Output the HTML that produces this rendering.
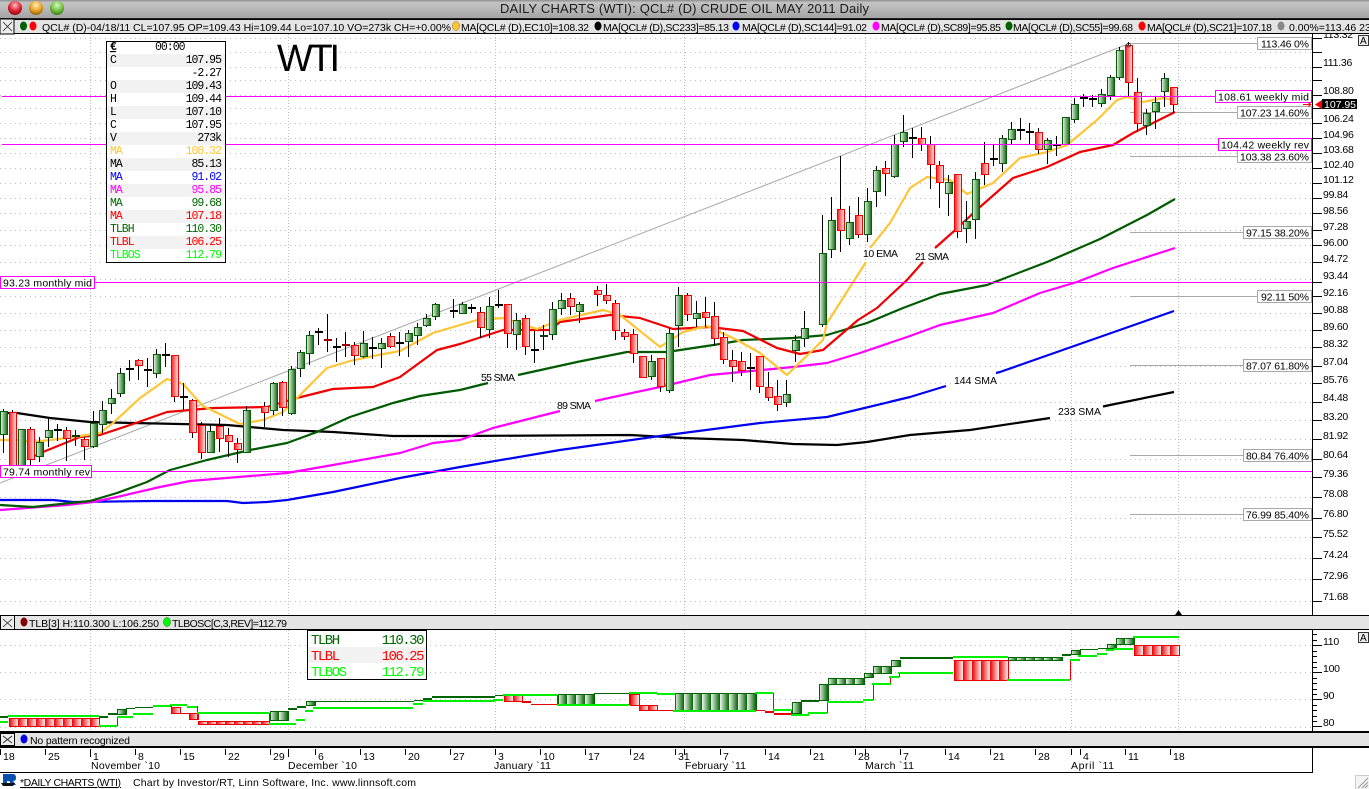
<!DOCTYPE html>
<html><head><meta charset="utf-8"><title>DAILY CHARTS (WTI)</title>
<style>
html,body{margin:0;padding:0;background:#fff;overflow:hidden}
svg{display:block}
text{font-family:"Liberation Sans",sans-serif;font-size:10.5px;fill:#000}
.m text,text.m{font-family:"Liberation Mono",monospace}
.b rect{width:7px;shape-rendering:crispEdges}
.ax text{font-size:10.5px;letter-spacing:-.25px}
.box rect{fill:#fff;stroke:#a8a8a8;stroke-width:1;shape-rendering:crispEdges}
.mbox rect{fill:#fff;stroke:#f0f;stroke-width:1;shape-rendering:crispEdges}
.ma{fill:none;stroke-width:2.2;stroke-linejoin:round}
.d text{font-size:11.5px;letter-spacing:-1px;font-family:"Liberation Mono",monospace}
.r{text-anchor:end}
.o text{font-size:14px;letter-spacing:-1.5px;font-family:"Liberation Mono",monospace}
</style></head><body>
<svg xmlns="http://www.w3.org/2000/svg" width="1369" height="789" viewBox="0 0 1369 789">
<defs>
<linearGradient id="tb" x1="0" y1="0" x2="0" y2="1"><stop offset="0" stop-color="#8c8c8c"/><stop offset=".14" stop-color="#c4c4c4"/><stop offset="1" stop-color="#a4a4a4"/></linearGradient>
<linearGradient id="cg"><stop offset="0" stop-color="#eef5ee"/><stop offset="1" stop-color="#0a6a0a"/></linearGradient>
<linearGradient id="cr"><stop offset="0" stop-color="#ff2020"/><stop offset="1" stop-color="#ffe8e8"/></linearGradient>
<linearGradient id="gb"><stop offset="0" stop-color="#f2f7f2"/><stop offset="1" stop-color="#006400"/></linearGradient>
<linearGradient id="rb"><stop offset="0" stop-color="#e80000"/><stop offset="1" stop-color="#ffeaea"/></linearGradient>
<pattern id="pg" patternUnits="userSpaceOnUse" width="9" height="200"><rect width="9" height="200" fill="url(#gb)"/></pattern>
<pattern id="pr" patternUnits="userSpaceOnUse" width="9" height="200"><rect width="9" height="200" fill="url(#rb)"/></pattern>
<radialGradient id="l1" cx=".5" cy=".3" r=".7"><stop offset="0" stop-color="#ffc0c0"/><stop offset=".6" stop-color="#e02030"/><stop offset="1" stop-color="#8a0a10"/></radialGradient>
<radialGradient id="l2" cx=".5" cy=".3" r=".7"><stop offset="0" stop-color="#ffeec0"/><stop offset=".6" stop-color="#e8a020"/><stop offset="1" stop-color="#906010"/></radialGradient>
<radialGradient id="l3" cx=".5" cy=".3" r=".7"><stop offset="0" stop-color="#d8f8c0"/><stop offset=".6" stop-color="#70c040"/><stop offset="1" stop-color="#3a7a20"/></radialGradient>
</defs>
<rect width="1369" height="789" fill="#fff"/>

<!-- grid -->
<g stroke="#bdbdbd" stroke-width="1" stroke-dasharray="1 4" fill="none" shape-rendering="crispEdges">
<path d="M0 38.500H1312M0 52.500H1312M0 67.500H1312M0 80.500H1312M0 95.500H1312M0 108.500H1312M0 123.500H1312M0 138.500H1312M0 153.500H1312M0 168.500H1312M0 183.500H1312M0 198.500H1312M0 213.500H1312M0 230.500H1312M0 245.500H1312M0 262.500H1312M0 279.500H1312M0 296.500H1312M0 313.500H1312M0 330.500H1312M0 347.500H1312M0 366.500H1312M0 383.500H1312M0 402.500H1312M0 420.500H1312M0 439.500H1312M0 459.500H1312M0 477.500H1312M0 497.500H1312M0 518.500H1312M0 537.500H1312M0 558.500H1312M0 579.500H1312M0 601.500H1312"/>
<path d="M0 645.500H1312M0 672.500H1312M0 699.500H1312M0 727.500H1312"/>
</g>
<g stroke="#bdbdbd" stroke-width="1" stroke-dasharray="1 2" fill="none" shape-rendering="crispEdges">
<path d="M90.500 34V615M288.500 34V615M495.500 34V615M684.500 34V615M865.500 34V615M1071.500 34V615M1178.500 34V615"/>
<path d="M90.500 630V731M288.500 630V731M495.500 630V731M684.500 630V731M865.500 630V731M1071.500 630V731M1178.500 630V731"/>
</g>

<!-- trend line -->
<path d="M0 483L1128 44" stroke="#a8a8a8" stroke-width="1" fill="none"/>
<!-- fib lines -->
<path d="M1127 43.500H1258M1130 112.500H1238M1130 156.500H1238M1130 232.500H1244M1130 296.500H1258M1130 365.500H1243M1130 455.500H1243M1130 514.500H1243" stroke="#a8a8a8" fill="none" shape-rendering="crispEdges"/>

<!-- moving averages -->
<polyline class="ma" stroke="#000" points="0,413 17,413 50,418 90,422 133,423 180,424 227,425 283,430 333,432 393,436 460,436 630,435 683,438 743,440 793,444 837,445 867,442 910,435 970,430 1050,418"/>
<polyline class="ma" stroke="#000" points="1103,406.500 1110,405 1174,392"/>
<polyline class="ma" stroke="#0000f0" points="0,500 53,500 73,502 153,501 227,501 243,503 267,502 287,500 333,492 400,478 460,467 560,450 660,436 760,423 827,417 910,397 946,386"/>
<polyline class="ma" stroke="#0000f0" points="996,373 1000,372 1174,311"/>
<polyline class="ma" stroke="#f0f" points="0,510 67,505 93,502 117,497 160,487 190,481 287,473 333,465 400,453 433,443 460,440 493,428 560,411"/>
<polyline class="ma" stroke="#f0f" points="595,401 660,387 710,375 793,367 827,363 860,353 910,336 940,325 993,313 1040,293 1077,282 1113,268 1175,248"/>
<polyline class="ma" stroke="#005a00" points="0,505 33,507 70,503 90,501 117,493 147,482 170,470 207,460 250,450 287,443 317,432 350,417 393,403 420,396 460,390 488,383"/>
<polyline class="ma" stroke="#005a00" points="518,375 577,362 627,352 667,352 720,344 743,340 793,338 827,335 867,323 903,308 940,294 987,285 1047,262 1100,239 1147,215 1175,199"/>
<polyline class="ma" stroke="#f00000" points="30,458 43,452 80,437 100,435 133,424 167,412 213,408 267,407 297,398 333,389 373,387 400,377 437,350 460,344 503,330 550,330 560,322 610,315 640,318 673,329 710,327 743,331 777,348 800,354 823,350 858,320 877,308 907,280 923,262"/>
<polyline class="ma" stroke="#f00000" points="935,248 953,232 980,207 1013,178 1047,167 1080,152 1113,145 1133,133 1175,112"/>
<polyline class="ma" stroke="#ffc535" points="0,440 20,440 33,442 67,438 100,433 113,423 140,398 167,379 183,384 203,406 240,424 263,420 283,412 297,398 327,368 350,361 373,356 400,351 433,333 460,325 477,320 503,318 537,329 560,320 603,310 620,315 660,347 683,332 707,326 737,340 760,353 787,375 823,340 827,323 850,287 866,262"/>
<polyline class="ma" stroke="#ffc535" points="870,248 890,223 910,188 927,177 950,180 967,194 993,183 1020,158 1047,152 1067,145 1097,120 1117,100 1127,97 1143,102 1163,98 1174,100"/>

<!-- wicks -->
<path stroke="#000" stroke-width="1" fill="none" shape-rendering="crispEdges" d="M3.500 409V453M12.500 410V467M21.500 429V467M30.500 427V465M39.500 437V462M48.500 419V447M57.500 424V441M66.500 427V461M75.500 430V446M84.500 437V460M93.500 411V448M102.500 401V433M111.500 389V414M120.500 368V397M129.500 360V381M138.500 359V380M147.500 358V387M156.500 349V378M165.500 343V367M174.500 355V402M183.500 383V410M192.500 399V438M201.500 422V459M210.500 424V452M219.500 418V452M228.500 428V457M237.500 438V463M246.500 406V453M264.500 402V427M273.500 382V415M282.500 381V416M291.500 366V415M300.500 350V377M309.500 331V365M318.500 328V345M327.500 314V352M336.500 338V362M345.500 332V357M354.500 342V365M363.500 331V358M372.500 337V359M381.500 338V368M390.500 333V348M399.500 332V356M408.500 330V357M417.500 323V345M426.500 314V327M435.500 303V320M453.500 299V318M462.500 302V314M471.500 304V313M480.500 307V338M489.500 297V338M498.500 290V308M507.500 304V348M516.500 313V350M525.500 315V355M534.500 331V363M543.500 325V350M552.500 302V340M561.500 293V315M570.500 293V315M579.500 302V323M597.500 286V306M606.500 284V304M615.500 300V340M624.500 329V340M633.500 329V363M642.500 356V378M651.500 355V380M660.500 358V392M669.500 328V393M678.500 287V347M687.500 293V321M696.500 301V327M705.500 297V327M714.500 302V346M723.500 332V364M732.500 350V382M741.500 352V376M750.500 353V390M759.500 356V393M768.500 372V401M777.500 380V411M786.500 380V407M795.500 335V362M804.500 311V347M822.500 215V327M831.500 197V258M840.500 156V252M849.500 206V245M858.500 197V238M867.500 188V242M876.500 166V207M885.500 161V196M894.500 135V178M903.500 115V147M912.500 128V158M921.500 127V151M930.500 136V189M939.500 161V208M948.500 175V216M957.500 174V238M966.500 201V243M975.500 172V239M984.500 142V185M993.500 145V166M1002.500 135V172M1011.500 122V144M1020.500 118V140M1029.500 123V144M1038.500 128V154M1047.500 138V164M1056.500 136V156M1065.500 117V144M1074.500 98V123M1083.500 94V107M1092.500 95V107M1101.500 89V107M1110.500 75V100M1119.500 47V80M1128.500 42V96M1137.500 78V132M1146.500 109V135M1155.500 96V129M1164.500 73V107M1173.500 87V113"/>
<!-- doji -->
<path stroke="#000" stroke-width="2" fill="none" shape-rendering="crispEdges" d="M54 430H62M126 369H134M144 370H152M162 355H170M180 397H188M315 332H323M333 347H341M369 348H377M396 343H404M450 311H458M468 308H476M495 305H503M531 350H539M747 368H755M909 138H917M990 159H998M1017 130H1025M1026 132H1034M1053 145H1061M1080 98H1088M1089 99H1097"/>
<path stroke="#0a3a0a" stroke-width="2" fill="none" shape-rendering="crispEdges" d="M72 436H80M540 336H548"/>
<path stroke="#a00000" stroke-width="2" fill="none" shape-rendering="crispEdges" d="M324 340H332M342 345H350"/>

<!-- green bodies -->
<g class="b" fill="url(#cg)" stroke="#0a5a0a">
<rect x="0.500" y="411.500" height="23"/><rect x="18.500" y="429.500" height="38"/><rect x="36.500" y="442.500" height="14"/><rect x="45.500" y="430.500" height="7"/><rect x="90.500" y="423.500" height="23"/><rect x="99.500" y="410.500" height="14"/><rect x="108.500" y="398.500" height="5"/><rect x="117.500" y="373.500" height="20"/><rect x="153.500" y="354.500" height="19"/><rect x="207.500" y="431.500" height="21"/><rect x="243.500" y="410.500" height="42"/><rect x="270.500" y="383.500" height="27"/><rect x="288.500" y="369.500" height="44"/><rect x="297.500" y="352.500" height="16"/><rect x="306.500" y="335.500" height="18"/><rect x="360.500" y="343.500" height="13"/><rect x="378.500" y="343.500" height="5"/><rect x="405.500" y="333.500" height="8"/><rect x="414.500" y="327.500" height="8"/><rect x="423.500" y="318.500" height="7"/><rect x="432.500" y="304.500" height="12"/><rect x="459.500" y="304.500" height="9"/><rect x="486.500" y="306.500" height="23"/><rect x="513.500" y="320.500" height="14"/><rect x="549.500" y="309.500" height="25"/><rect x="558.500" y="300.500" height="8"/><rect x="576.500" y="304.500" height="7"/><rect x="648.500" y="361.500" height="15"/><rect x="666.500" y="333.500" height="57"/><rect x="675.500" y="295.500" height="30"/><rect x="693.500" y="313.500" height="5"/><rect x="783.500" y="394.500" height="8"/><rect x="792.500" y="340.500" height="10"/><rect x="801.500" y="328.500" height="10"/><rect x="819.500" y="253.500" height="71"/><rect x="828.500" y="220.500" height="29"/><rect x="846.500" y="222.500" height="16"/><rect x="864.500" y="201.500" height="33"/><rect x="873.500" y="170.500" height="21"/><rect x="891.500" y="144.500" height="32"/><rect x="900.500" y="132.500" height="9"/><rect x="945.500" y="182.500" height="11"/><rect x="963.500" y="221.500" height="7"/><rect x="972.500" y="179.500" height="40"/><rect x="999.500" y="138.500" height="25"/><rect x="1008.500" y="129.500" height="10"/><rect x="1044.500" y="140.500" height="9"/><rect x="1062.500" y="117.500" height="27"/><rect x="1071.500" y="104.500" height="15"/><rect x="1098.500" y="94.500" height="9"/><rect x="1107.500" y="77.500" height="18"/><rect x="1116.500" y="50.500" height="27"/><rect x="1143.500" y="113.500" height="12"/><rect x="1152.500" y="102.500" height="9"/><rect x="1161.500" y="78.500" height="13"/>
</g>
<!-- red bodies -->
<g class="b" fill="url(#cr)" stroke="#f00000">
<rect x="9.500" y="412.500" height="55"/><rect x="27.500" y="429.500" height="30"/><rect x="63.500" y="430.500" height="8"/><rect x="81.500" y="439.500" height="7"/><rect x="135.500" y="360.500" height="5"/><rect x="171.500" y="355.500" height="41"/><rect x="189.500" y="400.500" height="32"/><rect x="198.500" y="425.500" height="27"/><rect x="216.500" y="426.500" height="12"/><rect x="225.500" y="435.500" height="6"/><rect x="234.500" y="443.500" height="6"/><rect x="261.500" y="406.500" height="6"/><rect x="279.500" y="382.500" height="25"/><rect x="351.500" y="345.500" height="10"/><rect x="387.500" y="336.500" height="10"/><rect x="477.500" y="312.500" height="15"/><rect x="504.500" y="304.500" height="29"/><rect x="522.500" y="318.500" height="28"/><rect x="567.500" y="298.500" height="8"/><rect x="594.500" y="290.500" height="4"/><rect x="603.500" y="295.500" height="5"/><rect x="612.500" y="303.500" height="27"/><rect x="621.500" y="332.500" height="4"/><rect x="630.500" y="334.500" height="19"/><rect x="639.500" y="356.500" height="21"/><rect x="657.500" y="358.500" height="28"/><rect x="684.500" y="295.500" height="19"/><rect x="702.500" y="312.500" height="5"/><rect x="711.500" y="316.500" height="22"/><rect x="720.500" y="337.500" height="22"/><rect x="729.500" y="360.500" height="6"/><rect x="738.500" y="361.500" height="9"/><rect x="756.500" y="356.500" height="30"/><rect x="765.500" y="387.500" height="10"/><rect x="774.500" y="396.500" height="8"/><rect x="837.500" y="209.500" height="21"/><rect x="855.500" y="215.500" height="19"/><rect x="882.500" y="168.500" height="5"/><rect x="918.500" y="138.500" height="6"/><rect x="927.500" y="144.500" height="20"/><rect x="936.500" y="165.500" height="17"/><rect x="954.500" y="174.500" height="57"/><rect x="981.500" y="163.500" height="11"/><rect x="1035.500" y="132.500" height="17"/><rect x="1125.500" y="45.500" height="37"/><rect x="1134.500" y="92.500" height="31"/><rect x="1170.500" y="87.500" height="17"/>
</g>

<!-- magenta levels -->
<path stroke="#f0f" stroke-width="1" fill="none" shape-rendering="crispEdges" d="M2 96.500H1216M2 144.500H1219M94 282.500H1312M90 471.500H1312"/>
<path d="M1122 43a2 2 0 1 0 .1 0" transform="translate(6.500 0)" fill="none" stroke="#333" stroke-width=".8"/>

<!-- level labels -->
<g class="box">
<rect x="1257.500" y="37.500" width="54" height="12"/><rect x="1237.500" y="106.500" width="74" height="12"/><rect x="1237.500" y="150.500" width="74" height="12"/><rect x="1243.500" y="226.500" width="68" height="12"/><rect x="1257.500" y="290.500" width="54" height="12"/><rect x="1243.500" y="359.500" width="68" height="12"/><rect x="1243.500" y="449.500" width="68" height="12"/><rect x="1243.500" y="508.500" width="68" height="12"/>
</g>
<g class="mbox">
<rect x="1215.500" y="90.500" width="96" height="12"/><rect x="1218.500" y="138.500" width="93" height="12"/><rect x="0.500" y="276.500" width="94" height="12"/><rect x="0.500" y="465.500" width="91" height="12"/>
</g>
<text x="1261" y="47.500" textLength="48">113.46 0%</text>
<text x="1240" y="116.500" textLength="69">107.23 14.60%</text>
<text x="1240" y="160.500" textLength="69">103.38 23.60%</text>
<text x="1246" y="236.500" textLength="63">97.15 38.20%</text>
<text x="1261" y="300.500" textLength="48">92.11 50%</text>
<text x="1246" y="369.500" textLength="63">87.07 61.80%</text>
<text x="1246" y="459.500" textLength="63">80.84 76.40%</text>
<text x="1246" y="518.500" textLength="63">76.99 85.40%</text>
<text x="1218" y="100.500" textLength="91">108.61 weekly mid</text>
<text x="1221" y="148.500" textLength="88">104.42 weekly rev</text>
<text x="3" y="286.500" textLength="89">93.23 monthly mid</text>
<text x="3" y="475.500" textLength="87">79.74 monthly rev</text>

<!-- MA labels -->
<text x="481" y="381" textLength="34">55 SMA</text>
<text x="557" y="409" textLength="34">89 SMA</text>
<text x="954" y="384" textLength="43">144 SMA</text>
<text x="1058" y="415" textLength="43">233 SMA</text>
<text x="863" y="257" textLength="35">10 EMA</text>
<text x="915" y="260" textLength="34">21 SMA</text>

<!-- WTI -->
<text x="277" y="71" style="font-size:38px" textLength="63">WTI</text>

<!-- Data box -->
<rect x="106.500" y="41.500" width="119" height="221" fill="#fff" stroke="#000" stroke-width="1" shape-rendering="crispEdges"/>
<path fill="#f2f2f2" d="M107 54h118v13H107zM107 80h118v13H107zM107 106h118v13H107zM107 132h118v13H107zM107 158h118v13H107zM107 184h118v13H107zM107 210h118v13H107zM107 236h118v13H107z"/>
<g class="d">
<text x="110" y="50" style="text-decoration:underline;font-weight:bold">€</text><text x="155" y="50">00:00</text>
<text x="110" y="63">C</text><text x="221" y="63" class="r">107.95</text>
<text x="221" y="76" class="r">-2.27</text>
<text x="110" y="89">O</text><text x="221" y="89" class="r">109.43</text>
<text x="110" y="102">H</text><text x="221" y="102" class="r">109.44</text>
<text x="110" y="115">L</text><text x="221" y="115" class="r">107.10</text>
<text x="110" y="128">C</text><text x="221" y="128" class="r">107.95</text>
<text x="110" y="141">V</text><text x="221" y="141" class="r">273k</text>
<text x="110" y="154" style="fill:#ffc535">MA</text><text x="221" y="154" class="r" style="fill:#ffc535">108.32</text>
<text x="110" y="167">MA</text><text x="221" y="167" class="r">85.13</text>
<text x="110" y="180" style="fill:#00f">MA</text><text x="221" y="180" class="r" style="fill:#00f">91.02</text>
<text x="110" y="193" style="fill:#f0f">MA</text><text x="221" y="193" class="r" style="fill:#f0f">95.85</text>
<text x="110" y="206" style="fill:#060">MA</text><text x="221" y="206" class="r" style="fill:#060">99.68</text>
<text x="110" y="219" style="fill:#f00">MA</text><text x="221" y="219" class="r" style="fill:#f00">107.18</text>
<text x="110" y="232" style="fill:#060">TLBH</text><text x="221" y="232" class="r" style="fill:#060">110.30</text>
<text x="110" y="245" style="fill:#f00">TLBL</text><text x="221" y="245" class="r" style="fill:#f00">106.25</text>
<text x="110" y="258" style="fill:#0f0">TLBOS</text><text x="221" y="258" class="r" style="fill:#0f0">112.79</text>
</g>

<!-- price axis -->
<g stroke="#000" stroke-width="1" fill="none" shape-rendering="crispEdges">
<path d="M1312.500 34V615M1312 38.500h10M1312 52.500h10M1312 67.500h10M1312 80.500h10M1312 95.500h10M1312 108.500h10M1312 123.500h10M1312 138.500h10M1312 153.500h10M1312 168.500h10M1312 183.500h10M1312 198.500h10M1312 213.500h10M1312 230.500h10M1312 245.500h10M1312 262.500h10M1312 282.500h10M1312 296.500h10M1312 313.500h10M1312 330.500h10M1312 347.500h10M1312 366.500h10M1312 383.500h10M1312 402.500h10M1312 420.500h10M1312 439.500h10M1312 459.500h10M1312 477.500h10M1312 497.500h10M1312 518.500h10M1312 537.500h10M1312 558.500h10M1312 579.500h10M1312 601.500h10"/>
<path d="M1312.500 630V731M1312 645.500h10M1312 672.500h10M1312 699.500h10M1312 726.500h10M1312 634.500h5M1312 640.500h5M1312 651.500h5M1312 656.500h5M1312 662.500h5M1312 667.500h5M1312 678.500h5M1312 683.500h5M1312 689.500h5M1312 694.500h5M1312 705.500h5M1312 710.500h5M1312 716.500h5M1312 721.500h5"/>
</g>
<g class="ax">
<text x="1323" y="38">113.32</text><text x="1323" y="66">111.36</text><text x="1323" y="94">108.80</text><text x="1323" y="122">106.24</text><text x="1323" y="138">104.96</text><text x="1323" y="153">103.68</text><text x="1323" y="168">102.40</text><text x="1323" y="183">101.12</text><text x="1323" y="198">99.84</text><text x="1323" y="214">98.56</text><text x="1323" y="230">97.28</text><text x="1323" y="246">96.00</text><text x="1323" y="262">94.72</text><text x="1323" y="279">93.44</text><text x="1323" y="296">92.16</text><text x="1323" y="313">90.88</text><text x="1323" y="330">89.60</text><text x="1323" y="347">88.32</text><text x="1323" y="365">87.04</text><text x="1323" y="383">85.76</text><text x="1323" y="401">84.48</text><text x="1323" y="420">83.20</text><text x="1323" y="439">81.92</text><text x="1323" y="458">80.64</text><text x="1323" y="477">79.36</text><text x="1323" y="497">78.08</text><text x="1323" y="517">76.80</text><text x="1323" y="537">75.52</text><text x="1323" y="558">74.24</text><text x="1323" y="579">72.96</text><text x="1323" y="600">71.68</text>
<text x="1323" y="645">110</text><text x="1323" y="672">100</text><text x="1323" y="699">90</text><text x="1323" y="726">80</text>
</g>

<!-- price tag -->
<rect x="1322" y="99" width="35" height="10" fill="#000"/>
<text x="1324" y="108" style="fill:#fff" textLength="32">107.95</text>
<path d="M1315 104.500L1322 100V109Z" fill="#f00"/>
<path d="M1303 104.500H1311M1308 102.500L1311 104.500L1308 106.500" stroke="#f00" stroke-width="1" fill="none"/>
<!-- bottom triangle -->
<path d="M1175 615L1178.500 610L1182 615Z" fill="#000"/>
<!-- A buttons -->
<rect x="1358.500" y="35.500" width="10" height="10" fill="#eee" stroke="#333" shape-rendering="crispEdges"/>
<text x="1360" y="44" style="font-size:10px">A</text>
<rect x="1358.500" y="632.500" width="10" height="10" fill="#eee" stroke="#333" shape-rendering="crispEdges"/>
<text x="1360" y="641" style="font-size:10px">A</text>

<!-- Oscillator: TLB bars -->
<g stroke="#006400" stroke-width="1" fill="url(#pg)" shape-rendering="crispEdges">
<rect x="117.500" y="709.500" width="9" height="5"/><rect x="270.500" y="711.500" width="18" height="9"/><rect x="306.500" y="701.500" width="9" height="4"/><rect x="558.500" y="694.500" width="36" height="10"/><rect x="675.500" y="693.500" width="81" height="17"/><rect x="792.500" y="702.500" width="9" height="11"/><rect x="819.500" y="684.500" width="9" height="16"/><rect x="828.500" y="678.500" width="36" height="6"/><rect x="864.500" y="673.500" width="9" height="4"/><rect x="873.500" y="666.500" width="18" height="7"/><rect x="891.500" y="660.500" width="9" height="6"/><rect x="1008.500" y="657.500" width="54" height="3"/><rect x="1071.500" y="650.500" width="9" height="4"/><rect x="1107.500" y="644.500" width="9" height="4"/><rect x="1116.500" y="638.500" width="18" height="6"/>
</g>
<g stroke="#e80000" stroke-width="1" fill="url(#pr)" shape-rendering="crispEdges">
<rect x="9.500" y="718.500" width="90" height="8"/><rect x="171.500" y="707.500" width="9" height="6"/><rect x="189.500" y="713.500" width="9" height="6"/><rect x="198.500" y="721.500" width="71" height="3"/><rect x="504.500" y="695.500" width="18" height="6"/><rect x="630.500" y="694.500" width="9" height="11"/><rect x="639.500" y="705.500" width="18" height="5"/><rect x="954.500" y="660.500" width="54" height="20"/><rect x="1134.500" y="645.500" width="45" height="10"/>
</g>
<!-- dark green TLB lines -->
<path stroke="#006400" stroke-width="2" fill="none" shape-rendering="crispEdges" d="M0 717H8M99 717H108M108 714H117M153 706H171M288 709H297M297 707H306M423 699H432M432 697H495M801 701H819M900 658H953M1062 655H1071"/>
<path stroke="#006400" stroke-width="1" fill="none" shape-rendering="crispEdges" d="M126 708.500H135M135 707.500H153M315 701.500H414M414 700.500H423M495 695.500H504M594 693.500H630M1080 649.500H1098M1098 648.500H1107"/>
<!-- red lines -->
<path stroke="#e80000" stroke-width="1" fill="none" shape-rendering="crispEdges" d="M180 713.500H189M531 704.500H557M657 710.500H675M756 710.500H765"/>
<path stroke="#e80000" stroke-width="2" fill="none" shape-rendering="crispEdges" d="M522 702H531M765 712H774M774 714H792"/>
<path stroke="#e80000" stroke-width="1" fill="none" shape-rendering="crispEdges" d="M99.500 718V726M117.500 717V726M171.500 706V713M197.500 706V720M269.500 713V724M557.500 695V704M629.500 693V705M675.500 694V710M773.500 693V713M791.500 710V714M827.500 702V713M873.500 684V700M890.500 677V684M899.500 673V677M1070.500 660V680"/>
<!-- bright green TLBOS -->
<path stroke="#00f000" stroke-width="2" fill="none" shape-rendering="crispEdges" d="M0 722H8M8 716H99M99 726H117M117 717H133M133 714H153M153 706H170M170 705H187M187 707H197M197 713H269M269 724H296M296 720H305M305 711H313M313 708H413M413 704H423M423 701H495M493 700H503M503 695H557M557 705H629M629 693H657M657 694H675M673 711H756M755 693H773M773 710H792M791 715H809M808 713H827M827 702H863M863 700H873M872 684H891M889 677H899M898 673H953M953 657H1008M1007 680H1070M1070 660H1080M1078 656H1097M1097 654H1107M1106 650H1114M1114 649H1133M1133 637H1179"/>

<!-- Oscillator data box -->
<rect x="307.500" y="630.500" width="119" height="49" fill="#fff" stroke="#000" stroke-width="1" shape-rendering="crispEdges"/>
<rect x="308" y="647" width="118" height="16" fill="#f2f2f2"/>
<g class="o">
<text x="311" y="644" style="fill:#060">TLBH</text><text x="423" y="644" class="r" style="fill:#060">110.30</text>
<text x="311" y="660" style="fill:#f00">TLBL</text><text x="423" y="660" class="r" style="fill:#f00">106.25</text>
<text x="311" y="676" style="fill:#0f0">TLBOS</text><text x="423" y="676" class="r" style="fill:#0f0">112.79</text>
</g>

<!-- title bar -->
<rect x="0" y="0" width="1369" height="18" fill="url(#tb)"/>
<rect x="0" y="18" width="1369" height="1" fill="#222"/>
<circle cx="15" cy="8" r="7" fill="url(#l1)"/><circle cx="36" cy="8" r="7" fill="url(#l2)"/><circle cx="57" cy="8" r="7" fill="url(#l3)"/>
<text x="500" y="13" style="font-size:13px;fill:#1c1c1c" textLength="369">DAILY CHARTS (WTI): QCL# (D) CRUDE OIL MAY 2011 Daily</text>

<!-- legend bar -->
<rect x="0" y="19" width="1369" height="15" fill="#e4e4e4"/>
<rect x="0" y="33" width="1369" height="1" fill="#000"/>
<rect x="0" y="19" width="1369" height="1" fill="#000"/>
<rect x="0" y="19" width="14" height="15" fill="#eee" stroke="#000" stroke-width="1"/>
<path d="M3 22L12 31M12 22L3 31" stroke="#222" stroke-width=".8" fill="none"/>
<ellipse cx="23.500" cy="26" rx="3.500" ry="4.500" fill="#006000"/>
<ellipse cx="33" cy="26" rx="3.500" ry="4.500" fill="#f00"/>
<text x="42" y="31" textLength="409">QCL# (D)-04/18/11 CL=107.95 OP=109.43 Hi=109.44 Lo=107.10 VO=273k CH=+0.00%</text>
<ellipse cx="456" cy="26" rx="3.500" ry="4.500" fill="#ffc535" stroke="#8a6a00" stroke-width=".5"/>
<text x="461" y="31" textLength="128">MA[QCL# (D),EC10]=108.32</text>
<ellipse cx="598" cy="26" rx="3.500" ry="4.500" fill="#000"/>
<text x="603" y="31" textLength="126">MA[QCL# (D),SC233]=85.13</text>
<ellipse cx="736" cy="26" rx="3.500" ry="4.500" fill="#00f"/>
<text x="742" y="31" textLength="125">MA[QCL# (D),SC144]=91.02</text>
<ellipse cx="876" cy="26" rx="3.500" ry="4.500" fill="#f0f"/>
<text x="881" y="31" textLength="120">MA[QCL# (D),SC89]=95.85</text>
<ellipse cx="1009" cy="26" rx="3.500" ry="4.500" fill="#006000"/>
<text x="1013" y="31" textLength="120">MA[QCL# (D),SC55]=99.68</text>
<ellipse cx="1142" cy="26" rx="3.500" ry="4.500" fill="#f00"/>
<text x="1147" y="31" textLength="125">MA[QCL# (D),SC21]=107.18</text>
<ellipse cx="1281" cy="26" rx="3.500" ry="4.500" fill="#888"/>
<text x="1289" y="31">0.00%=113.46 23</text>

<!-- oscillator header -->
<rect x="0" y="616" width="1369" height="14" fill="#e4e4e4"/>
<rect x="0" y="615" width="1369" height="1" fill="#000"/>
<rect x="0" y="629" width="1369" height="1" fill="#000"/>
<rect x="0.500" y="615.500" width="14" height="14" fill="#eee" stroke="#000"/>
<path d="M3 619L12 627M12 619L3 627" stroke="#222" stroke-width=".8" fill="none"/>
<ellipse cx="24" cy="622" rx="3.500" ry="4.500" fill="#800000"/>
<text x="29" y="627" textLength="130">TLB[3] H:110.300 L:106.250</text>
<ellipse cx="167" cy="622" rx="3.500" ry="4.500" fill="#0f0" stroke="#060" stroke-width=".5"/>
<text x="172" y="627" textLength="115">TLBOSC[C,3,REV]=112.79</text>

<!-- pattern header -->
<rect x="0" y="733" width="1369" height="13" fill="#e4e4e4"/>
<rect x="0" y="731" width="1369" height="2" fill="#000"/>
<rect x="0" y="746" width="1369" height="2" fill="#000"/>
<rect x="0.500" y="733.500" width="14" height="12" fill="#eee" stroke="#000"/>
<path d="M3 736L12 743M12 736L3 743" stroke="#222" stroke-width=".8" fill="none"/>
<ellipse cx="24" cy="739" rx="3.500" ry="4.500" fill="#00e"/>
<text x="30" y="744" textLength="100">No pattern recognized</text>

<!-- date axis -->
<rect x="0" y="772" width="1313" height="1" fill="#000"/>
<rect x="1312" y="748" width="1" height="25" fill="#000"/>
<path stroke="#000" fill="none" shape-rendering="crispEdges" d="M0.500 749V755M45.500 749V755M90.500 749V757M135.500 749V755M180.500 749V755M225.500 749V755M270.500 749V755M288.500 749V757M315.500 749V755M360.500 749V755M405.500 749V755M450.500 749V755M495.500 749V755M540.500 749V755M585.500 749V755M630.500 749V755M675.500 749V755M684.500 749V755M720.500 749V755M765.500 749V755M810.500 749V755M855.500 749V755M865.500 749V755M900.500 749V755M945.500 749V755M990.500 749V755M1035.500 749V755M1071.500 749V755M1080.500 749V755M1125.500 749V755M1170.500 749V755"/>
<g>
<text x="3" y="760">18</text><text x="48" y="760">25</text><text x="93" y="760">1</text><text x="138" y="760">8</text><text x="183" y="760">15</text><text x="228" y="760">22</text><text x="273" y="760">29</text><text x="318" y="760">6</text><text x="363" y="760">13</text><text x="408" y="760">20</text><text x="453" y="760">27</text><text x="498" y="760">3</text><text x="543" y="760">10</text><text x="588" y="760">17</text><text x="633" y="760">24</text><text x="678" y="760">31</text><text x="723" y="760">7</text><text x="768" y="760">14</text><text x="813" y="760">21</text><text x="858" y="760">28</text><text x="903" y="760">7</text><text x="948" y="760">14</text><text x="993" y="760">21</text><text x="1038" y="760">28</text><text x="1083" y="760">4</text><text x="1128" y="760">11</text><text x="1173" y="760">18</text>
<text x="91" y="769" textLength="69">November `10</text><text x="288" y="769" textLength="69">December `10</text><text x="494" y="769" textLength="57">January `11</text><text x="685" y="769" textLength="61">February `11</text><text x="865" y="769" textLength="49">March `11</text><text x="1071" y="769" textLength="43">April `11</text>
</g>

<!-- footer -->
<path d="M3 774H13Q16 774 16 778Q16 781 13 781L16 785H12L9 781H7V785H3Z" fill="#0a4fb0"/>
<path d="M1 783H15L13 786H3Z" fill="#111"/>
<text x="20" y="786" textLength="101" style="text-decoration:underline">*DAILY CHARTS (WTI)</text>
<text x="133" y="786" textLength="283">Chart by Investor/RT, Linn Software, Inc. www.linnsoft.com</text>
<rect x="1355.500" y="775.500" width="14" height="14" fill="#f4f4f4" stroke="#ccc"/>
<path d="M1358 788L1368 778M1362 788L1368 782M1365 788L1368 785" stroke="#999" fill="none"/>
</svg>
</body></html>
